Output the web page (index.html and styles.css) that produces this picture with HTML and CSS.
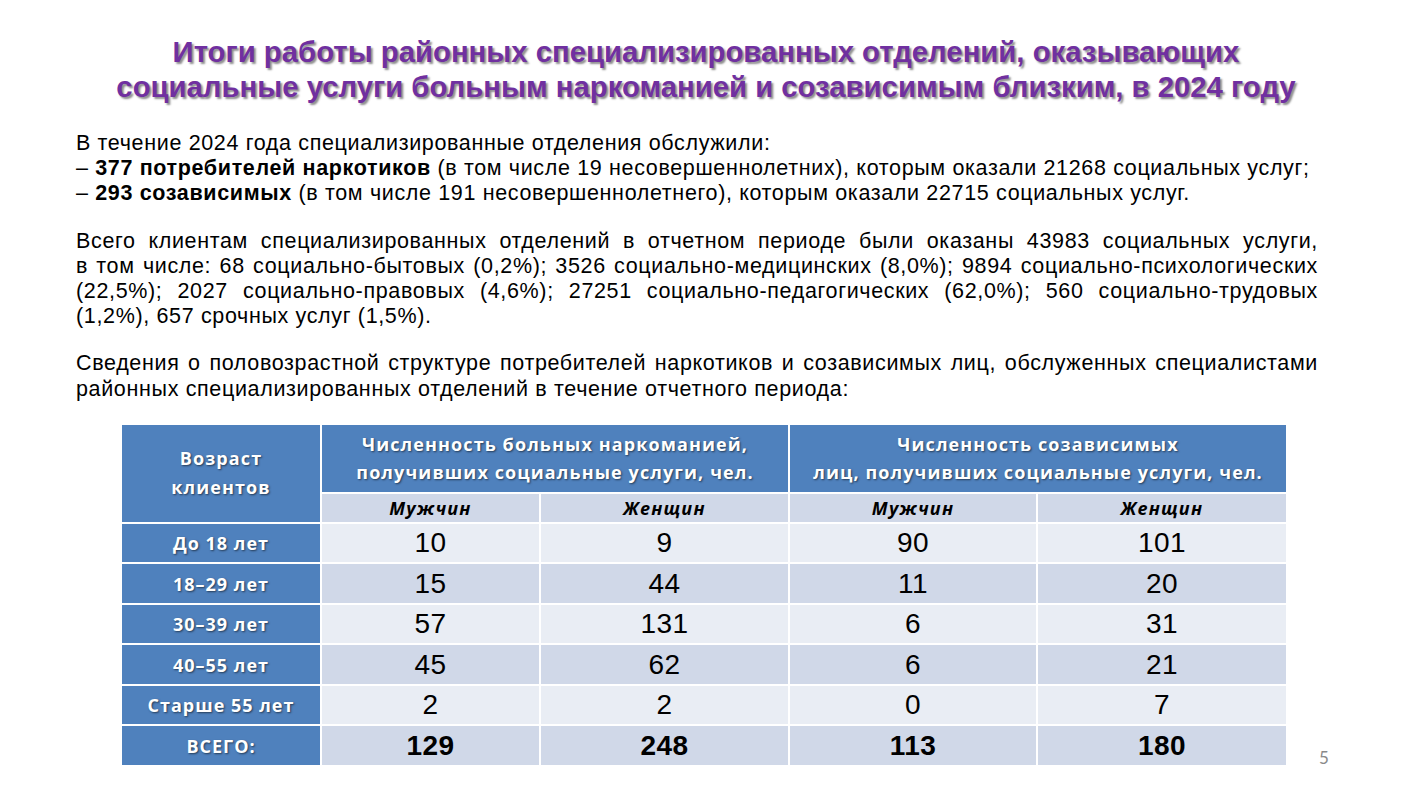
FILE: index.html
```html
<!DOCTYPE html>
<html lang="ru">
<head>
<meta charset="utf-8">
<title>Итоги работы</title>
<link rel="stylesheet" href="styles.css">
</head>
<body>
<div class="slide">
  <h1 class="title">Итоги работы районных специализированных отделений, оказывающих<br>социальные услуги больным наркоманией и созависимым близким, в 2024 году</h1>
  <div class="text">
    <p>В течение 2024 года специализированные отделения обслужили:<br>– <b>377 потребителей наркотиков</b> (в том числе 19 несовершеннолетних), которым оказали 21268 социальных услуг;<br>– <b>293 созависимых</b> (в том числе 191 несовершеннолетнего), которым оказали 22715 социальных услуг.</p>
    <p class="just"><span class="jline">Всего клиентам специализированных отделений в отчетном периоде были оказаны 43983 социальных услуги,</span> в том числе: 68 социально-бытовых (0,2%); 3526 социально-медицинских (8,0%); 9894 социально-психологических (22,5%); 2027 социально-правовых (4,6%); 27251 социально-педагогических (62,0%); 560 социально-трудовых (1,2%), 657 срочных услуг (1,5%).</p>
    <p class="just">Сведения о половозрастной структуре потребителей наркотиков и созависимых лиц, обслуженных специалистами районных специализированных отделений в течение отчетного периода:</p>
  </div>
  <table class="data">
    <colgroup>
      <col class="c1"><col class="c2"><col class="c3"><col class="c4"><col class="c5">
    </colgroup>
    <thead>
      <tr class="h1">
        <th rowspan="2" class="age-h">Возраст<br>клиентов</th>
        <th colspan="2">Численность больных наркоманией,<br>получивших социальные услуги, чел.</th>
        <th colspan="2">Численность созависимых<br>лиц, получивших социальные услуги, чел.</th>
      </tr>
      <tr class="h2">
        <th>Мужчин</th><th>Женщин</th><th>Мужчин</th><th>Женщин</th>
      </tr>
    </thead>
    <tbody>
      <tr class="odd"><th>До 18 лет</th><td>10</td><td>9</td><td>90</td><td>101</td></tr>
      <tr class="even"><th>18–29 лет</th><td>15</td><td>44</td><td>11</td><td>20</td></tr>
      <tr class="odd"><th>30–39 лет</th><td>57</td><td>131</td><td>6</td><td>31</td></tr>
      <tr class="even"><th>40–55 лет</th><td>45</td><td>62</td><td>6</td><td>21</td></tr>
      <tr class="odd"><th>Старше 55 лет</th><td>2</td><td>2</td><td>0</td><td>7</td></tr>
      <tr class="even total"><th>ВСЕГО:</th><td>129</td><td>248</td><td>113</td><td>180</td></tr>
    </tbody>
  </table>
  <div class="pagenum">5</div>
</div>
</body>
</html>
```
FILE: styles.css
```css
html, body {
  margin: 0;
  padding: 0;
  background: #ffffff;
}
.slide {
  position: relative;
  width: 1412px;
  height: 794px;
  box-sizing: border-box;
  padding: 34px 94px 0 76px;
  font-family: "Liberation Sans", Arial, sans-serif;
  color: #000;
}
.title {
  margin: 0;
  padding-left: 18px;
  text-align: center;
  font-family: "Liberation Sans Narrow", "Liberation Sans", Arial, sans-serif;
  font-weight: bold;
  font-size: 29.3px;
  line-height: 35px;
  color: #7030A0;
  text-shadow: 2px 2px 2px rgba(0,0,0,0.45);
}
.text {
  margin-top: 27px;
  font-size: 21.5px;
  letter-spacing: 0.65px;
  line-height: 25.2px;
}
.text p {
  margin: 0 0 22px 0;
}
.text p.just {
  text-align: justify;
}
.text p:last-child {
  margin-bottom: 0;
}
.jline {
  display: block;
  text-align-last: justify;
}
.data {
  margin-top: 21px;
  margin-left: 44px;
  width: 1166px;
  border-collapse: collapse;
  table-layout: fixed;
}
.c1 { width: 200px; }
.c2 { width: 219px; }
.c3 { width: 249px; }
.c4 { width: 248px; }
.c5 { width: 250px; }
.data th, .data td {
  border: 2px solid #ffffff;
  padding: 0;
  text-align: center;
  vertical-align: middle;
}
.data thead th {
  font-family: "Open Sans", Lato, sans-serif;
  font-weight: bold;
}
.h1 th {
  height: 67px;
  background: #4F81BD;
  color: #fff;
  font-size: 18px;
  letter-spacing: 1.1px;
  line-height: 28px;
  text-shadow: 1px 1px 2px rgba(0,0,0,0.55);
}
.h1 th.age-h {
  line-height: 29px;
}
.h2 th {
  height: 28px;
  background: #D0D8E8;
  color: #000;
  font-style: italic;
  font-size: 18px;
  letter-spacing: 1.2px;
  line-height: 20px;
}
tbody th {
  background: #4F81BD;
  color: #fff;
  font-family: "Open Sans", Lato, sans-serif;
  font-weight: bold;
  font-size: 18px;
  letter-spacing: 1px;
  text-shadow: 1px 1px 2px rgba(0,0,0,0.55);
  height: 38.5px;
}
tbody td {
  font-family: "Liberation Sans", Arial, sans-serif;
  font-size: 28px;
  letter-spacing: 0.5px;
  line-height: 30px;
  color: #000;
  height: 38.5px;
}
tr.odd td { background: #E9EDF4; }
tr.even td { background: #D0D8E8; }
tr.total td { font-weight: bold; }
.pagenum {
  position: absolute;
  left: 1319px;
  top: 747px;
  font-family: Lato, "Open Sans", sans-serif;
  font-size: 17px;
  color: #8a8a8a;
}
```
